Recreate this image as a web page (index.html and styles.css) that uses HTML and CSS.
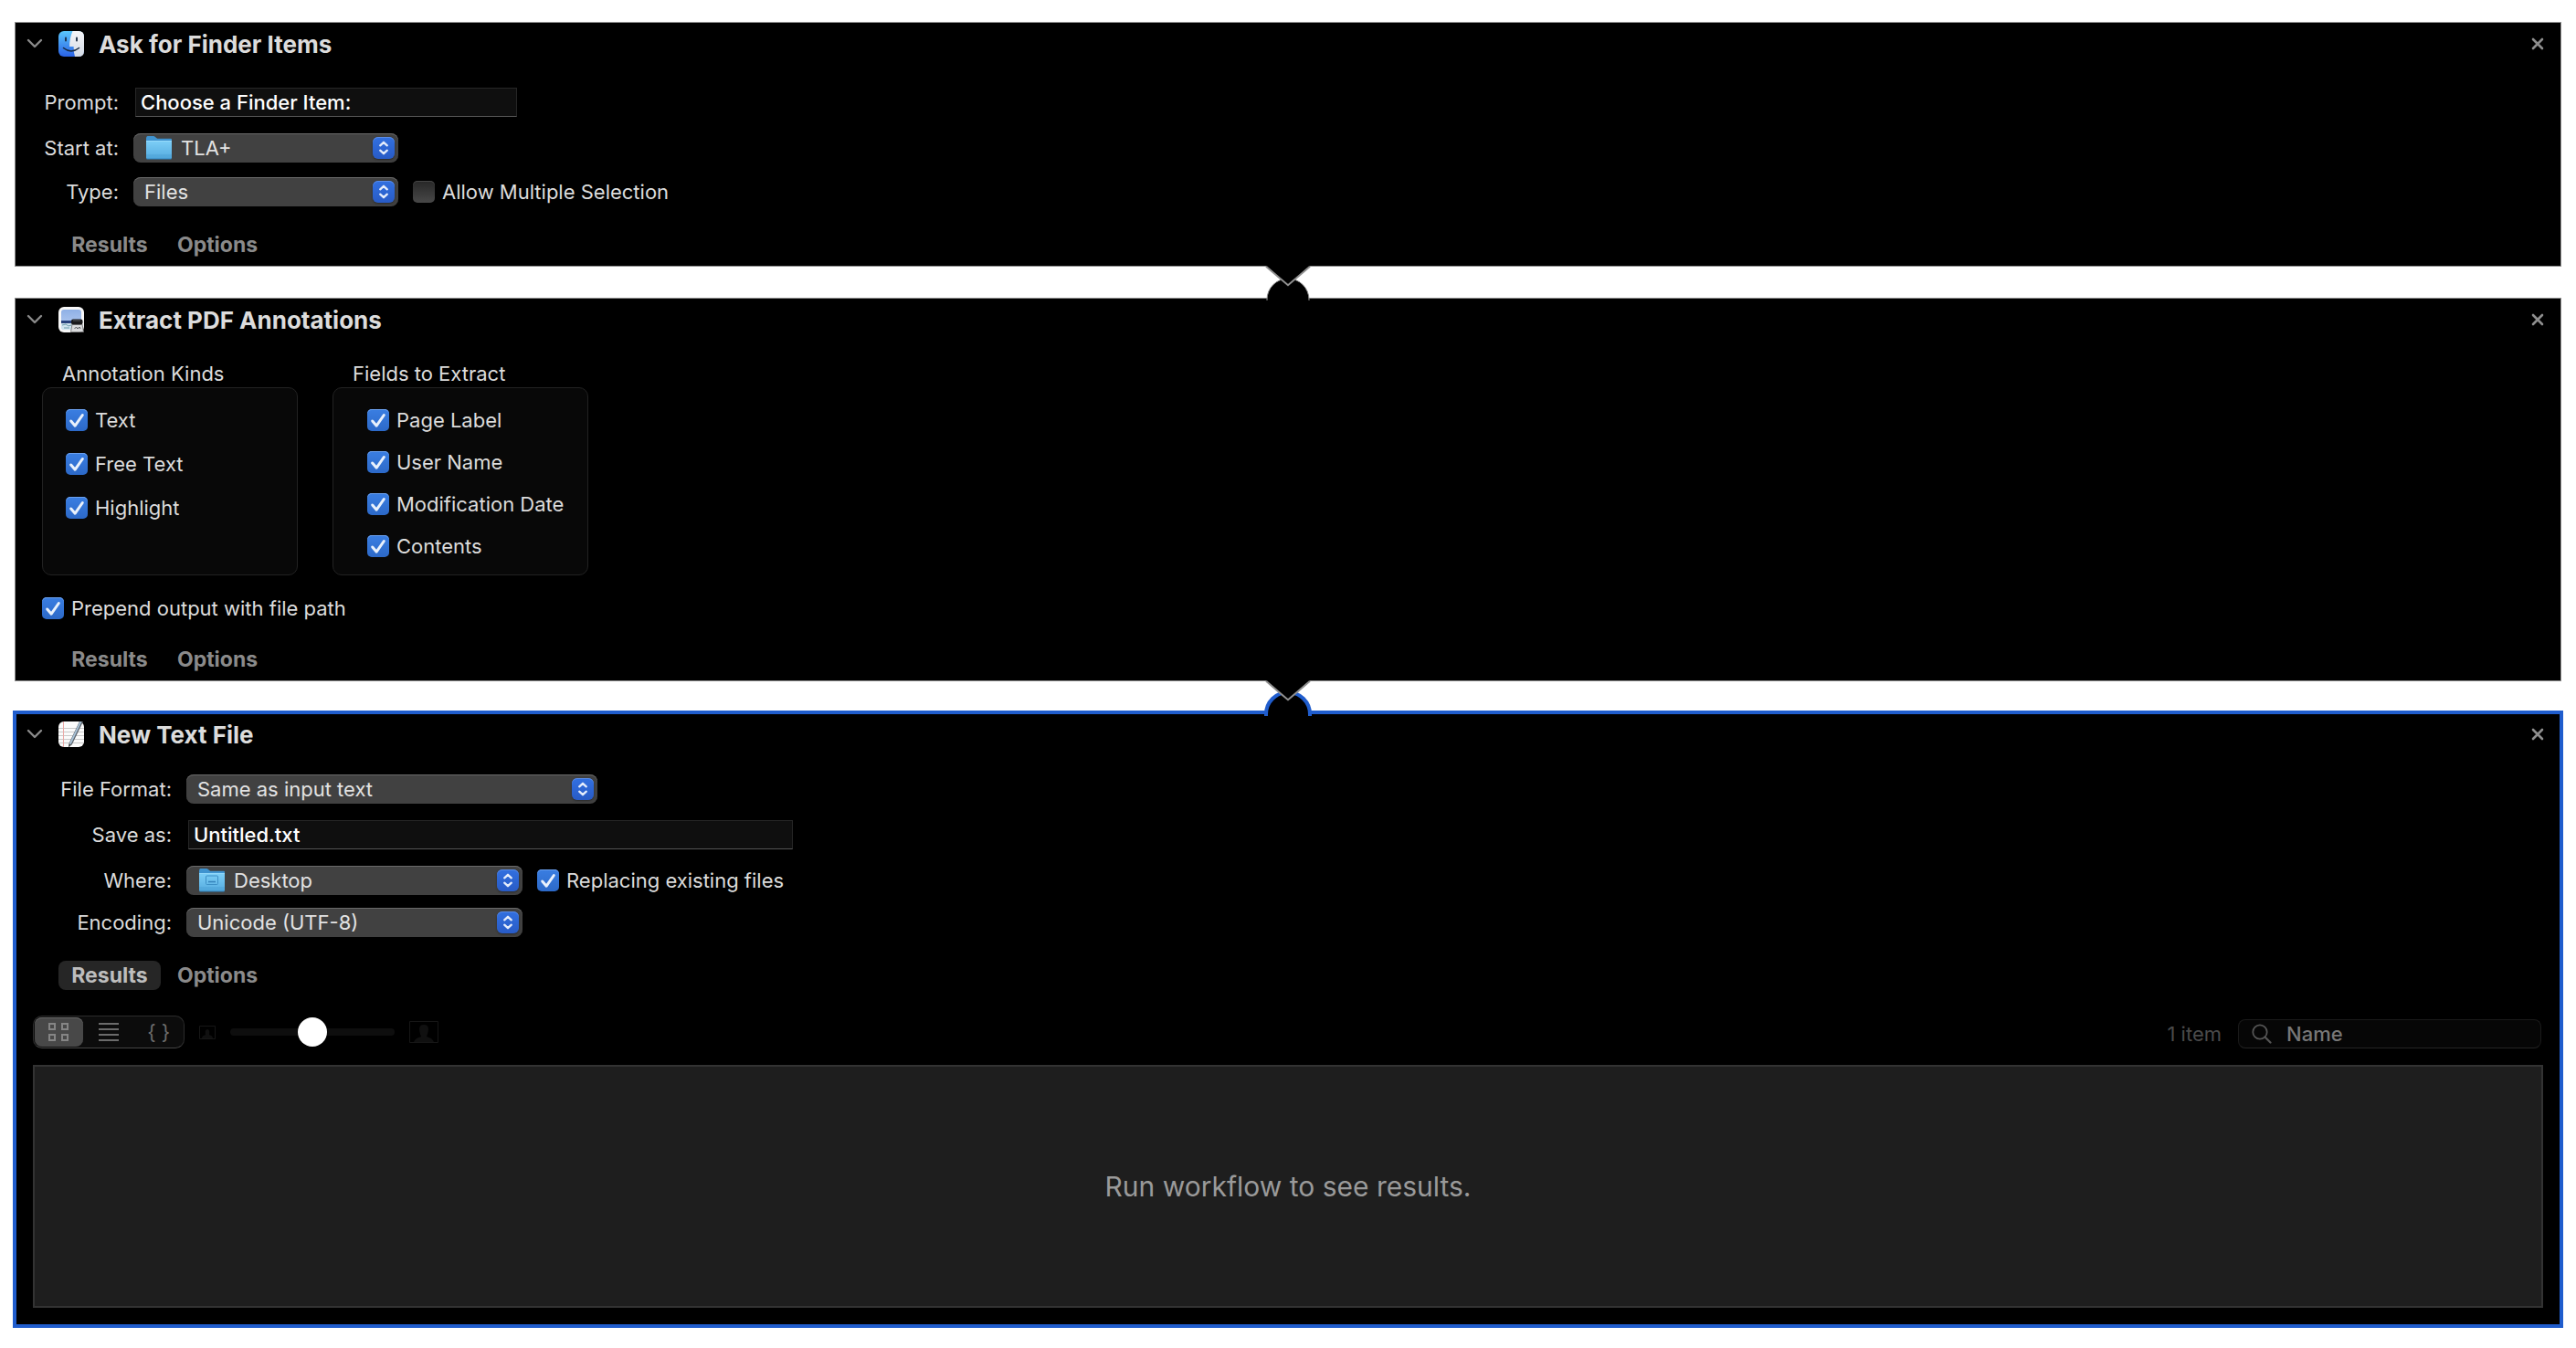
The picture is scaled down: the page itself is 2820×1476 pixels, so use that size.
FILE: index.html
```html
<!DOCTYPE html>
<html lang="en">
<head>
<meta charset="utf-8">
<title>Workflow</title>
<link rel="stylesheet" href="styles.css">
</head>
<body>
<svg class="defs" aria-hidden="true">
  <defs>
    <linearGradient id="folder-front" x1="0" y1="0" x2="0" y2="1"><stop offset="0" stop-color="#7bcdf6"/><stop offset="1" stop-color="#55abdf"/></linearGradient>
    <linearGradient id="finder-blue" x1="0" y1="0" x2="0" y2="1"><stop offset="0" stop-color="#5ac6fb"/><stop offset="1" stop-color="#2a62e6"/></linearGradient>
    <linearGradient id="finder-white" x1="0" y1="0" x2="0" y2="1"><stop offset="0" stop-color="#f6f6f8"/><stop offset="1" stop-color="#d3dae6"/></linearGradient>
    <linearGradient id="sky" x1="0" y1="0" x2="0" y2="1"><stop offset="0" stop-color="#8fb0e6"/><stop offset="1" stop-color="#b9d0f2"/></linearGradient>
  </defs>
  <symbol id="chevron" viewBox="0 0 18 12"><path d="M2 2l7 7 7-7" fill="none" stroke="#8a8a8a" stroke-width="2.4" stroke-linecap="round" stroke-linejoin="round"/></symbol>
  <symbol id="close" viewBox="0 0 14 14"><path d="M2 2l10 10M12 2L2 12" fill="none" stroke="#8e8e8e" stroke-width="2.6" stroke-linecap="round"/></symbol>
  <symbol id="tick" viewBox="0 0 24 24"><path d="M5.700 13l4.500 5.200L18.300 6.500" fill="none" stroke="#e9f1fc" stroke-width="3" stroke-linecap="round" stroke-linejoin="round"/></symbol>
  <symbol id="arrows" viewBox="0 0 24 24"><path d="M8.200 9.300L12 5.800l3.800 3.500M8.200 14.700l3.800 3.500 3.800-3.500" fill="none" stroke="#e4ecfb" stroke-width="2.300" stroke-linecap="round" stroke-linejoin="round"/></symbol>
  <symbol id="folder" viewBox="0 0 28 28">
    <path d="M0 3.500Q0 1 1.500 1H8q1 0 2 1l1.500 1.200q.8.600 2 .6H27q1 0 1 1V10H0z" fill="#3f93cf"/>
    <path d="M0 7h28v17.500q0 1.500-1.500 1.500h-25Q0 26 0 24.500z" fill="url(#folder-front)"/>
    <path d="M0 22h28M0 24h28" stroke="#4a9ed3" stroke-width=".8"/>
    <path d="M0 6.500h28" stroke="#96dafb" stroke-width="1"/>
    <path d="M.5 26h27" stroke="#2c7fb8" stroke-width="1"/>
  </symbol>
</svg>

<main class="workflow">
  <section class="action">
    <header class="action-header">
      <button class="icon-button disclosure" aria-label="Collapse"><svg width="18" height="12"><use href="#chevron"/></svg></button>
      <svg class="app-icon" width="28" height="28" viewBox="0 0 28 28" aria-hidden="true">
        <rect width="28" height="28" rx="6" fill="url(#finder-blue)"/>
        <path d="M15.500 0H22q6 0 6 6v16q0 6-6 6h-4q-1.500-5-1.400-11h-4.500Q12 8 15.500 0z" fill="url(#finder-white)"/>
        <path d="M8 7.500v3M20 7.500v3" stroke="#16263c" stroke-width="1.800" stroke-linecap="round"/>
        <path d="M5.500 18.500q8.500 7 17 0" fill="none" stroke="#16263c" stroke-width="1.500" stroke-linecap="round"/>
      </svg>
      <h2>Ask for Finder Items</h2>
      <button class="icon-button close" aria-label="Remove"><svg width="14" height="14"><use href="#close"/></svg></button>
    </header>
    <div class="form form-finder">
      <label for="prompt">Prompt:</label>
      <div class="field"><input class="text-field" id="prompt" type="text" value="Choose a Finder Item:"></div>
      <label for="start">Start at:</label>
      <div class="field"><span class="popup has-icon"><select id="start"><option>TLA+</option></select><svg class="popup-icon" width="28" height="28"><use href="#folder"/></svg><svg class="popup-arrows" width="24" height="24"><use href="#arrows"/></svg></span></div>
      <label for="type">Type:</label>
      <div class="field"><span class="popup"><select id="type"><option>Files</option></select><svg class="popup-arrows" width="24" height="24"><use href="#arrows"/></svg></span>
        <label class="check"><input type="checkbox"><svg width="24" height="24"><use href="#tick"/></svg>Allow Multiple Selection</label></div>
    </div>
    <nav class="tabs"><button>Results</button><button>Options</button></nav>
    <svg class="arrow" width="48" height="23" viewBox="0 0 48 23" aria-hidden="true"><path d="M0-1h48v2L24 21.500 0 1z"/><path class="arrow-edge" d="M0 .8L24 21.300 48 .8"/></svg>
  </section>

  <section class="action">
    <svg class="bump" width="52" height="27" viewBox="0 0 52 27" aria-hidden="true"><path d="M3 27v-1a23 23 0 0 1 46 0v1"/></svg>
    <header class="action-header">
      <button class="icon-button disclosure" aria-label="Collapse"><svg width="18" height="12"><use href="#chevron"/></svg></button>
      <svg class="app-icon" width="28" height="28" viewBox="0 0 28 28" aria-hidden="true">
        <rect width="28" height="28" rx="6" fill="#f7f7f7"/>
        <rect x="3" y="3" width="22" height="22" rx="3" fill="url(#sky)"/>
        <path d="M3 15h22v3H3z" fill="#27417c"/>
        <path d="M3 18h22v4q0 3-3 3H6q-3 0-3-3z" fill="#cfe3ee"/>
        <path d="M4 20l4-1 3 2 3-1M6 23h6" stroke="#6f9dac" fill="none"/>
        <path d="M15 19h11l1.500 8.500h-14z" fill="#d9dadc" stroke="#6e6e70" stroke-width=".8"/>
        <path d="M17.500 24l2-2 1.500 2 2-2 1 2" fill="none" stroke="#55585c"/>
        <rect x="14" y="13.500" width="12.500" height="6" rx="2" fill="#19191b"/>
        <path d="M16 15h8" stroke="#55585c"/>
      </svg>
      <h2>Extract PDF Annotations</h2>
      <button class="icon-button close" aria-label="Remove"><svg width="14" height="14"><use href="#close"/></svg></button>
    </header>
    <div class="groups">
      <div class="group" role="group" aria-labelledby="kinds">
        <h3 id="kinds">Annotation Kinds</h3>
        <div class="group-box kinds">
          <label class="check"><input type="checkbox" checked><svg width="24" height="24"><use href="#tick"/></svg>Text</label>
          <label class="check"><input type="checkbox" checked><svg width="24" height="24"><use href="#tick"/></svg>Free Text</label>
          <label class="check"><input type="checkbox" checked><svg width="24" height="24"><use href="#tick"/></svg>Highlight</label>
        </div>
      </div>
      <div class="group" role="group" aria-labelledby="fields">
        <h3 id="fields">Fields to Extract</h3>
        <div class="group-box fields">
          <label class="check"><input type="checkbox" checked><svg width="24" height="24"><use href="#tick"/></svg>Page Label</label>
          <label class="check"><input type="checkbox" checked><svg width="24" height="24"><use href="#tick"/></svg>User Name</label>
          <label class="check"><input type="checkbox" checked><svg width="24" height="24"><use href="#tick"/></svg>Modification Date</label>
          <label class="check"><input type="checkbox" checked><svg width="24" height="24"><use href="#tick"/></svg>Contents</label>
        </div>
      </div>
    </div>
    <div class="prepend"><label class="check"><input type="checkbox" checked><svg width="24" height="24"><use href="#tick"/></svg>Prepend output with file path</label></div>
    <nav class="tabs"><button>Results</button><button>Options</button></nav>
    <svg class="arrow" width="48" height="23" viewBox="0 0 48 23" aria-hidden="true"><path d="M0-1h48v2L24 21.500 0 1z"/><path class="arrow-edge" d="M0 .8L24 21.300 48 .8"/></svg>
  </section>

  <section class="action selected">
    <svg class="bump" width="52" height="27" viewBox="0 0 52 27" aria-hidden="true"><path d="M2 28v-2a24 24 0 0 1 48 0v2"/></svg>
    <header class="action-header">
      <button class="icon-button disclosure" aria-label="Collapse"><svg width="18" height="12"><use href="#chevron"/></svg></button>
      <svg class="app-icon" width="28" height="28" viewBox="0 0 28 28" aria-hidden="true">
        <rect width="28" height="28" rx="6" fill="#fbfbfb"/>
        <path d="M0 7.500h28M0 11.500h28M0 15.500h28M0 19.500h28M0 23.500h28" stroke="#c9c9c9"/>
        <path d="M5.500 0v28" stroke="#eba9a6"/>
        <path d="M25.500-1L13 25" stroke="#5d646c" stroke-width="3.600"/>
        <path d="M25-1L12.800 24.500" stroke="#a9c3d8" stroke-width="1.800"/>
        <path d="M11.300 24.500l-.3 4 3.200-3z" fill="#444"/>
      </svg>
      <h2>New Text File</h2>
      <button class="icon-button close" aria-label="Remove"><svg width="14" height="14"><use href="#close"/></svg></button>
    </header>
    <div class="form form-file">
      <label for="format">File Format:</label>
      <div class="field spaced"><span class="popup wide"><select id="format"><option>Same as input text</option></select><svg class="popup-arrows" width="24" height="24"><use href="#arrows"/></svg></span></div>
      <label for="save">Save as:</label>
      <div class="field spaced"><input class="text-field" id="save" type="text" value="Untitled.txt"></div>
      <label for="where">Where:</label>
      <div class="field"><span class="popup has-icon"><select id="where"><option>Desktop</option></select><svg class="popup-icon" width="28" height="28" viewBox="0 0 28 28"><use href="#folder"/><rect x="7.500" y="9" width="13" height="9.500" rx="1" fill="none" stroke="#3d8fc6"/><path d="M10 15.500h8" stroke="#3482ba" stroke-width="1.500"/></svg><svg class="popup-arrows" width="24" height="24"><use href="#arrows"/></svg></span>
        <label class="check"><input type="checkbox" checked><svg width="24" height="24"><use href="#tick"/></svg>Replacing existing files</label></div>
      <label for="encoding">Encoding:</label>
      <div class="field"><span class="popup"><select id="encoding"><option>Unicode (UTF-8)</option></select><svg class="popup-arrows" width="24" height="24"><use href="#arrows"/></svg></span></div>
    </div>
    <nav class="tabs"><button class="current">Results</button><button>Options</button></nav>
    <div class="toolbar">
      <div class="segments">
        <button class="on" aria-label="Icons"><svg width="22" height="20" viewBox="0 0 22 20"><path d="M1 1h6v6H1zM15 1h6v6h-6zM1 13h6v6H1zM15 13h6v6h-6z" fill="none" stroke="#858585" stroke-width="2"/></svg></button>
        <button aria-label="List"><svg width="22" height="20" viewBox="0 0 22 20"><path d="M0 1h22M0 7h22M0 13h22M0 19h22" stroke="#6b6b6b" stroke-width="2"/></svg></button>
        <button class="braces">{ }</button>
      </div>
      <svg class="person-small" width="18" height="15" viewBox="0 0 18 15" aria-hidden="true"><path d="M.5.500h17v14H.5z" fill="none" stroke="#161616"/><path d="M3 14q0-3 4-4-1-6 2-6t2 6q4 1 4 4z" fill="#101010"/></svg>
      <input class="size" type="range" min="0" max="100" value="50" aria-label="Icon size">
      <svg class="person-large" width="32" height="24" viewBox="0 0 32 24" aria-hidden="true"><path d="M.5.500h31v23H.5z" fill="none" stroke="#161616"/><path d="M5 23q1-4 8-6-5-13 3-13t3 13q7 2 8 6z" fill="#101010"/></svg>
      <span class="count">1 item</span>
      <label class="search"><svg width="22" height="22" viewBox="0 0 22 22" aria-hidden="true"><circle cx="9" cy="9" r="7.700" fill="none" stroke="#555" stroke-width="1.800"/><path d="M14.500 14.500l6 6" stroke="#555" stroke-width="2.200" stroke-linecap="round"/></svg><input type="search" placeholder="Name" aria-label="Name"></label>
    </div>
    <div class="results"><p>Run workflow to see results.</p></div>
  </section>
</main>
</body>
</html>
```
FILE: styles.css
```css
* { box-sizing: border-box; }

body {
  margin: 0;
  background: #fff;
  color: #dcdcdc;
  font: 22px/32px Inter, "Liberation Sans", sans-serif;
}

.defs { position: absolute; width: 0; height: 0; }

button, input, select { font: inherit; color: inherit; margin: 0; }
button { border: 0; padding: 0; background: none; }
svg { display: block; flex: none; }
h2, h3, p { margin: 0; }

.workflow {
  display: flex;
  flex-direction: column;
  gap: 34px;
  padding: 24px 16px;
}

.action {
  position: relative;
  background: #000;
  border: 1px solid #8f8f8f;
  padding-bottom: 7px;
}
.action.selected {
  border-color: #205dcd;
  box-shadow: 0 0 0 2px #205dcd, inset 0 0 0 1px #205dcd;
  padding-bottom: 19px;
}

/* Connectors between consecutive actions */
.arrow, .bump {
  position: absolute;
  left: 50%;
  transform: translateX(-50%);
  overflow: visible;
}
.arrow { top: 100%; z-index: 2; }
.arrow-edge { fill: none; stroke: #8f8f8f; stroke-width: 2; }
.bump { bottom: 100%; margin-bottom: -2px; stroke: #8f8f8f; }
.selected .bump { stroke: #205dcd; stroke-width: 4; }

.action-header {
  display: flex;
  align-items: center;
  height: 46px;
  padding: 0 18px 0 12px;
}
.icon-button { display: grid; place-items: center; }
.app-icon { margin: 0 16px 0 17px; }
.close { margin-left: auto; }
h2 { padding-top: 2px; font-size: 26px; line-height: 32px; font-weight: 700; }

.form { display: grid; column-gap: 16px; justify-content: start; align-items: start; }
.form > label { text-align: right; }
.form-finder { grid-template-columns: 113px auto; row-gap: 17px; padding: 24px 0 26px; }
.form-file { grid-template-columns: 171px auto; row-gap: 14px; padding: 21px 0 26px; }

.field { display: flex; gap: 16px; align-items: center; }
.field.spaced { margin-bottom: 4px; }

.text-field {
  width: 418px;
  height: 32px;
  margin-left: 2px;
  padding: 0 5px;
  border: 1px solid #262626;
  border-bottom-color: #555;
  background: #0f0f0f;
  color: #fff;
  font-weight: 500;
}
.form-finder { row-gap: 16px; padding-top: 25px; }
.form-finder .text-field { margin-bottom: 2px; }
.form-file .text-field { width: 662px; }

.popup { position: relative; width: 290px; }
.form-file .popup { width: 368px; }
.form-file .popup.wide { width: 450px; }
.popup select {
  appearance: none;
  display: block;
  width: 100%;
  height: 32px;
  padding: 0 36px 0 12px;
  border: 0;
  border-radius: 8px;
  background: #414141;
  box-shadow: inset 0 1px #6a6a6a;
  color: #e2e2e2;
}
.popup.has-icon select { padding-left: 52px; }
.popup-icon, .popup-arrows { position: absolute; pointer-events: none; }
.popup-icon { left: 14px; top: 2px; }
.popup-arrows {
  right: 4px;
  top: 4px;
  border-radius: 6px;
  background: linear-gradient(#3270e0, #285bc6);
  box-shadow: inset 0 1px #5a8ce8, 0 1px 2px #2a2a2a;
}

.check {
  display: grid;
  grid-template-columns: 24px auto;
  column-gap: 8px;
  align-items: center;
  justify-content: start;
  line-height: 24px;
  white-space: nowrap;
}
.check input, .check svg { grid-area: 1 / 1; }
.check input {
  appearance: none;
  width: 24px;
  height: 24px;
  border-radius: 5px;
  background: linear-gradient(#272727, #484848);
  box-shadow: inset 0 1px #464646;
}
.check input:checked { background: linear-gradient(#3a7ee2, #2c69c8); box-shadow: inset 0 1px #6ba0ee; }
.check svg { position: relative; pointer-events: none; visibility: hidden; }
.check input:checked + svg { visibility: visible; }

.groups { display: flex; gap: 38px; padding: 21px 29px 0; }
.group { width: 280px; display: flex; flex-direction: column; }
h3 { font-size: 22px; line-height: 30px; font-weight: 400; padding-left: 22px; }
.group-box {
  flex: 1;
  display: flex;
  flex-direction: column;
  border: 1px solid #222;
  border-radius: 10px;
  background: #080808;
}
.kinds { gap: 24px; padding: 23px 25px; }
.fields { gap: 22px; padding: 23px 37px 19px; }
.prepend { padding: 24px 29px 28px; }

.tabs { display: flex; gap: 6px; padding-left: 47px; }
.tabs button { width: 112px; height: 32px; border-radius: 8px; color: #8a8a8a; font-size: 23px; font-weight: 700; }
.tabs .current { background: #262626; color: #bdbdbd; }

.toolbar { display: flex; align-items: center; height: 36px; margin: 28px 21px 18px 19px; }
.segments {
  display: flex;
  gap: 2px;
  width: 166px;
  height: 36px;
  padding: 1px;
  border: 1px solid #2c2c2c;
  border-bottom-color: #454545;
  border-radius: 10px;
  background: #0c0c0c;
}
.segments button { flex: 1; display: grid; place-items: center; border-radius: 8px; }
.segments .on { background: #484848; box-shadow: inset 0 1px #666; }
.segments .braces { color: #6b6b6b; }
.person-small { margin: 0 16px; }
.size { appearance: none; width: 180px; height: 32px; background: none; }
.size::-webkit-slider-runnable-track { height: 8px; border-radius: 4px; background: #0e0e0e; }
.size::-webkit-slider-thumb { appearance: none; width: 32px; height: 32px; margin-top: -12px; border-radius: 50%; background: #fff; }
.person-large { margin-left: 16px; }
.count { align-self: flex-end; margin-left: auto; color: #4a4a4a; }
.search {
  align-self: flex-end;
  display: flex;
  align-items: center;
  width: 332px;
  height: 32px;
  margin-left: 18px;
  padding-left: 14px;
  gap: 16px;
  border: 1px solid #1a1a1a;
  border-bottom-color: #242424;
  border-radius: 8px;
  background: #060606;
}
.search input { flex: 1; min-width: 0; padding: 0; border: 0; outline: 0; background: none; }
.search input::placeholder { color: #777; font-weight: 500; opacity: 1; }

.results {
  display: grid;
  place-items: center;
  height: 266px;
  margin: 0 19px;
  border: 2px solid #333;
  background: #1e1e1e;
  color: #9a9a9a;
}
.results p { font-size: 30px; line-height: 40px; }
```
